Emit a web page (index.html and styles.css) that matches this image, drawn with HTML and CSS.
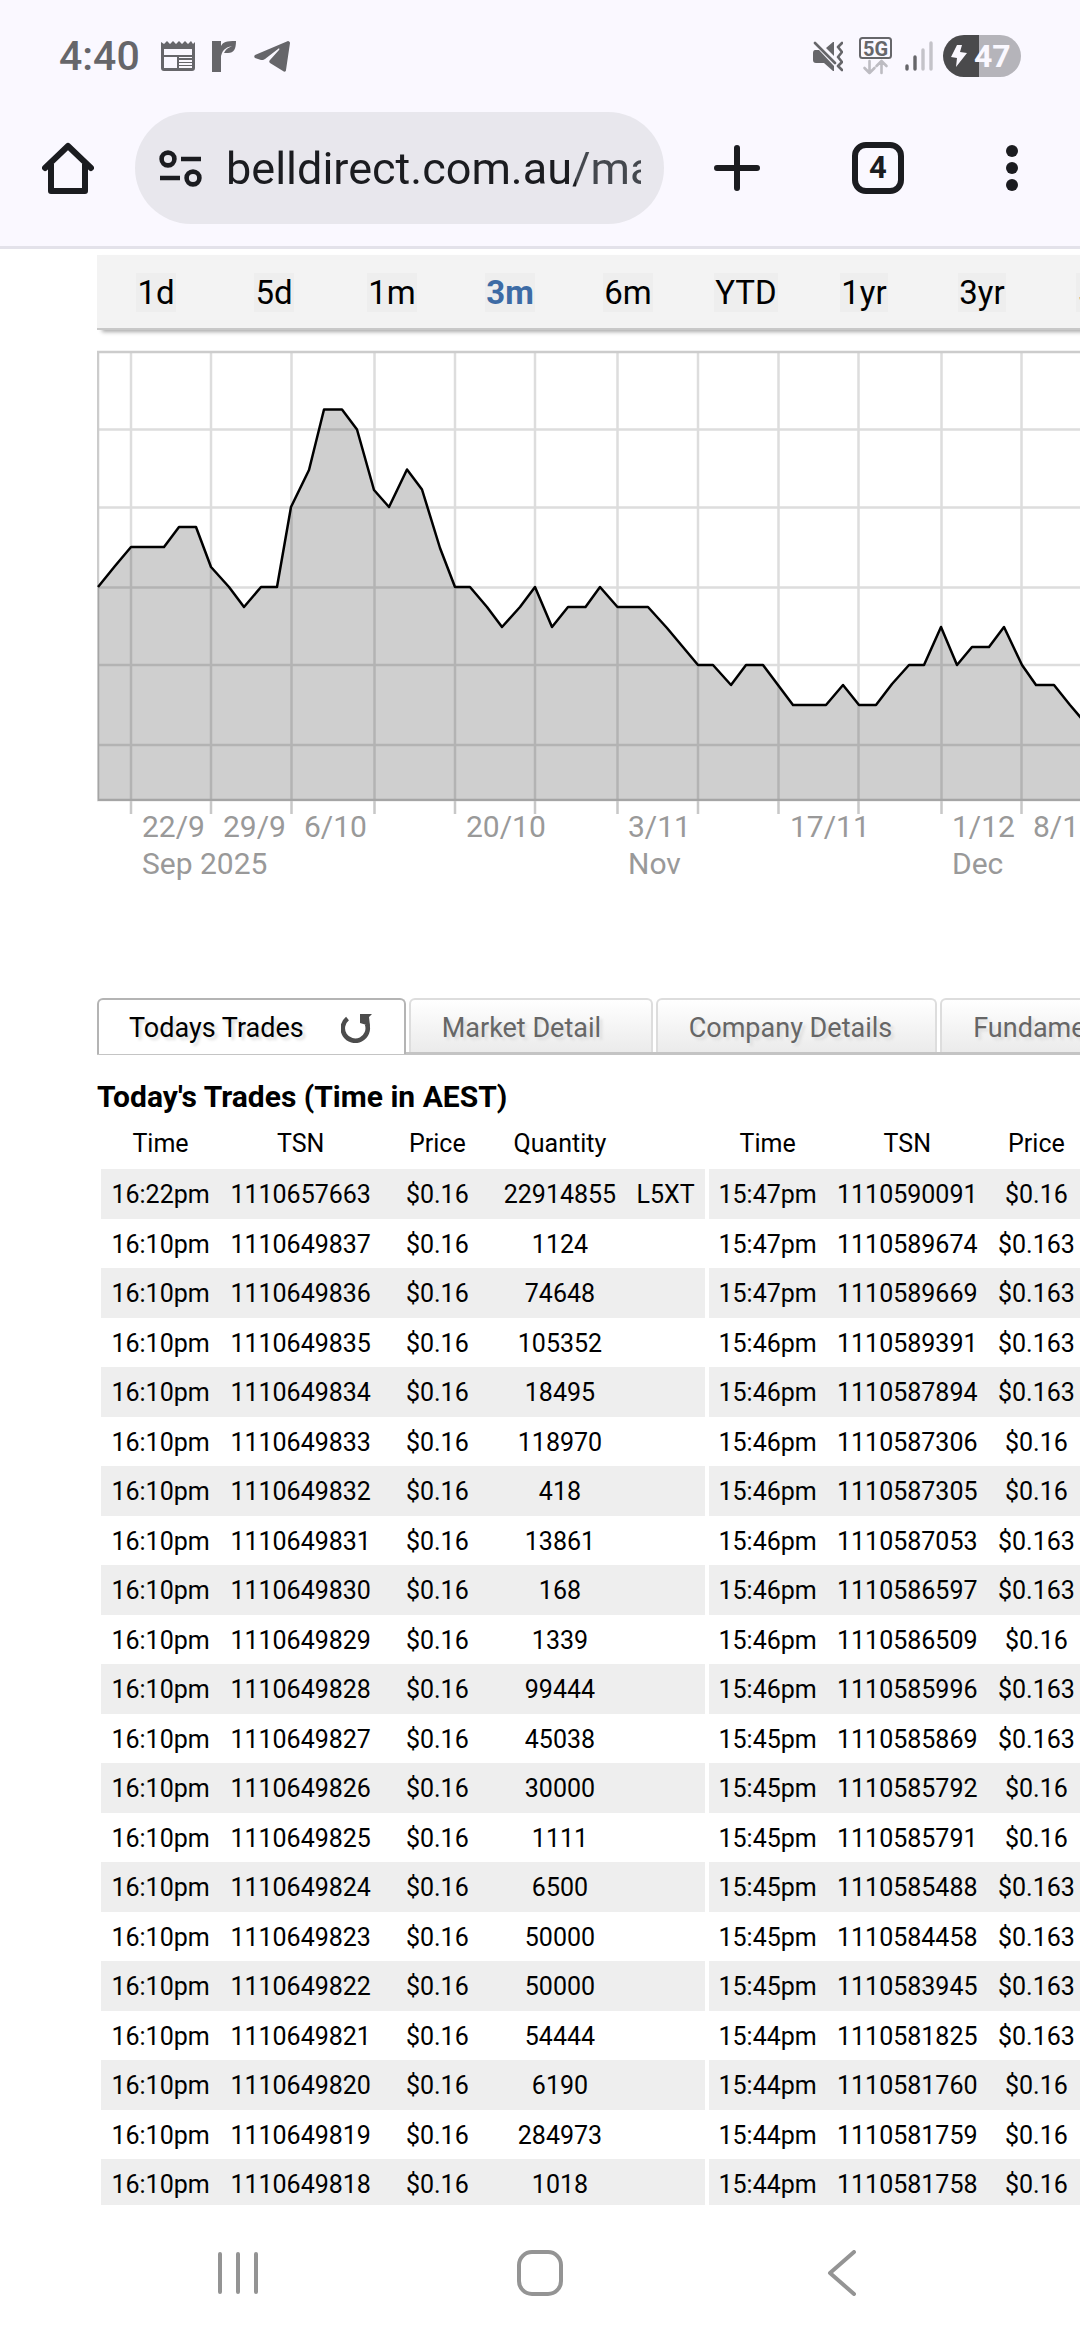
FILE: index.html
```html
<!DOCTYPE html>
<html lang="en">
<head>
<meta charset="utf-8">
<meta name="viewport" content="width=device-width, initial-scale=1">
<title>Bell Direct</title>
<link rel="stylesheet" href="styles.css">
</head>
<body>
<header class="browser">
  <div class="status">
    <span class="clock">4:40</span>
    <svg class="st-cal" width="34" height="32" viewBox="0 0 34 32"><path fill="#66666a" fill-rule="evenodd" d="M0 2l3 2 3-3 3 3 3-3 3 3 3-3 3 3 3-3 3 3 3-3 2 3 2-2v26a3 3 0 0 1-3 3H3a3 3 0 0 1-3-3zM3 9v6h28V9zM3 17v11h13V17zM18 17v1h13v-1zM18 20v2h13v-2zM18 23v2h13v-2zM18 26v2h13v-2z"/></svg>
    <svg class="st-r" width="24" height="32" viewBox="0 0 24 32"><path fill="#66666a" d="M0 1h9v5C11 2 14 1 24 1c0 8-2 12-8 12h-4c2-4 4-5 8-7-5 1-8 3-10 7l-1 3v16H0z"/></svg>
    <svg class="st-tg" width="36" height="32" viewBox="0 0 36 32"><path fill="#66666a" d="M34 1c1 0 2 1 2 2l-4 27c0 2-2 2-3 1l-13-8c-1-1-1-2 0-3l9-10c1-1 0-2-1-1L11 19c-1 1-3 1-4 1l-6-2c-1-1-1-2 0-3z"/></svg>
    <span class="spacer"></span>
    <svg class="st-mute" width="30" height="32" viewBox="0 0 30 32"><path fill="#66666a" d="M2 10h4l15 16v5h-1l-9-8H3c-2 0-3-1-3-3v-7c0-2 1-3 2-3zM13 8l7-6h1v14z"/><path fill="none" stroke="#66666a" stroke-width="2.6" stroke-linecap="round" stroke-linejoin="round" d="M2 3l20 20M29 3l-4 4 4 5-4 5 4 5-4 4 4 4"/></svg>
    <svg class="st-5g" width="33" height="38" viewBox="0 0 33 38"><rect x="1" y="1" width="31" height="20" rx="2.500" fill="none" stroke="#66666a" stroke-width="2"/><text x="16.500" y="18.500" text-anchor="middle" class="t5g">5G</text><path fill="none" stroke="#bdbcc2" stroke-width="2.600" stroke-linecap="round" stroke-linejoin="round" d="M10.500 24v12M5.500 31l5 5 5-5M22.500 36V24M17.500 29l5-5 5 5"/></svg>
    <svg class="st-sig" width="28" height="30" viewBox="0 0 28 30"><g stroke-width="3.400" stroke-linecap="round"><path stroke="#66666a" d="M2 25v3M10 16v12"/><path stroke="#c4c3c9" d="M18 9v19M26 2v26"/></g></svg>
    <span class="battery"><svg width="16" height="22" viewBox="0 0 16 22"><path fill="#faf8ff" d="M6 0h5L9 7l7 1L5 22l1-9-6-1z"/></svg>47</span>
  </div>
  <div class="toolbar">
    <button class="ico home" aria-label="Home"><svg width="52" height="52" viewBox="0 0 52 52"><path fill="none" stroke="#1b1c20" stroke-width="6" stroke-linejoin="round" stroke-linecap="round" d="M3 26L26 4l23 22"/><path fill="none" stroke="#1b1c20" stroke-width="6" stroke-linejoin="round" d="M9 22v27h34V22"/></svg></button>
    <div class="omnibox">
      <svg width="43" height="37" viewBox="0 0 43 37"><g fill="none" stroke="#1b1c20" stroke-width="4.600"><circle cx="9" cy="9" r="6.400"/><circle cx="34" cy="28" r="6.400"/><path d="M22 9h20M1 28h20"/></g></svg>
      <input class="url" type="text" aria-label="Address" value="belldirect.com.au/markets">
    </div>
    <button class="ico" aria-label="New tab"><svg width="46" height="48" viewBox="0 0 46 48"><path stroke="#1b1c20" stroke-width="6" stroke-linecap="round" d="M23 4v40M3 24h40"/></svg></button>
    <button class="tabcount" aria-label="Open tabs">4</button>
    <button class="ico menu" aria-label="Menu"><svg width="12" height="48" viewBox="0 0 12 48"><g fill="#1b1c20"><circle cx="6" cy="7" r="6"/><circle cx="6" cy="24" r="6"/><circle cx="6" cy="41" r="6"/></g></svg></button>
  </div>
</header>
<main class="page">
  <div class="ranges">
    <button><span>1d</span></button><button><span>5d</span></button><button><span>1m</span></button><button class="on"><span>3m</span></button><button><span>6m</span></button><button><span>YTD</span></button><button><span>1yr</span></button><button><span>3yr</span></button><button><span>5yr</span></button>
  </div>
  <svg class="chart" width="1000" height="540" viewBox="97 350 1000 540" role="img" aria-label="Price, three months">
    <g class="grid"><path d="M97 429.500h1000M97 507.500h1000M97 587.500h1000M97 665h1000M97 745h1000"/><path d="M131 352v448M211 352v448M291.500 352v448M374.500 352v448M455 352v448M535 352v448M617.500 352v448M698 352v448M778.500 352v448M858.500 352v448M941.500 352v448M1021.500 352v448"/></g>
    <path class="ticks" d="M131 801v13M211 801v13M291.500 801v13M374.500 801v13M455 801v13M535 801v13M617.500 801v13M698 801v13M778.500 801v13M858.500 801v13M941.500 801v13M1021.500 801v13"/>
    <path class="axis" d="M1097 352H98v448h999"/>
    <path class="area" d="M98 801V587L115 566 131 547H164L179 527H196L211 567 229 587 244 607 261 587H277L291 507 309 470 324 409.500H342L357 429.500 374 490 389 507 407 469.500 422 489.500 440 548 455 587H470L487 607 502 627 520 607 535 587 552 627 568 607H585.500L600 587 617.500 607H648L667 628 698 665H713L731 685 746 665H763L778 685 793 705H826L843 685 859 705H876L892 684 909 665H924L941 627 957 665 972 647H989L1004 627 1022 665 1036 685H1054L1070 705 1087 725V801z"/>
    <path class="line" d="M98 587L115 566 131 547H164L179 527H196L211 567 229 587 244 607 261 587H277L291 507 309 470 324 409.500H342L357 429.500 374 490 389 507 407 469.500 422 489.500 440 548 455 587H470L487 607 502 627 520 607 535 587 552 627 568 607H585.500L600 587 617.500 607H648L667 628 698 665H713L731 685 746 665H763L778 685 793 705H826L843 685 859 705H876L892 684 909 665H924L941 627 957 665 972 647H989L1004 627 1022 665 1036 685H1054L1070 705 1087 725"/>
    <g class="dates"><text x="142" y="837">22/9</text><text x="223" y="837">29/9</text><text x="304" y="837">6/10</text><text x="466" y="837">20/10</text><text x="628" y="837">3/11</text><text x="790" y="837">17/11</text><text x="952" y="837">1/12</text><text x="1033" y="837">8/12</text><text x="142" y="874">Sep 2025</text><text x="628" y="874">Nov</text><text x="952" y="874">Dec</text></g>
  </svg>
  <div class="tabs">
    <button class="tab current">Todays Trades<svg width="32" height="30" viewBox="0 0 32 30"><path fill="none" stroke="#4c4c4c" stroke-width="4.600" d="M6.500 5.500A12.500 12.500 0 1 0 26 11"/><path fill="#4c4c4c" d="M19 1h12l-3 3 1 9-10-3z"/></svg></button>
    <button class="tab">Market Detail</button>
    <button class="tab">Company Details</button>
    <button class="tab">Fundamentals</button>
  </div>
  <h2>Today's Trades (Time in AEST)</h2>
  <table class="trades">
    <colgroup><col class="c-time"><col class="c-tsn"><col class="c-price"><col class="c-qty"><col class="c-code"><col class="c-time2"><col class="c-tsn"><col class="c-price2"></colgroup>
    <thead><tr><th>Time</th><th>TSN</th><th>Price</th><th>Quantity</th><th></th><th class="g">Time</th><th>TSN</th><th>Price</th></tr></thead>
    <tbody>
      <tr><td>16:22pm</td><td>1110657663</td><td>$0.16</td><td>22914855</td><td>L5XT</td><td class="g">15:47pm</td><td>1110590091</td><td>$0.16</td></tr>
      <tr><td>16:10pm</td><td>1110649837</td><td>$0.16</td><td>1124</td><td></td><td class="g">15:47pm</td><td>1110589674</td><td>$0.163</td></tr>
      <tr><td>16:10pm</td><td>1110649836</td><td>$0.16</td><td>74648</td><td></td><td class="g">15:47pm</td><td>1110589669</td><td>$0.163</td></tr>
      <tr><td>16:10pm</td><td>1110649835</td><td>$0.16</td><td>105352</td><td></td><td class="g">15:46pm</td><td>1110589391</td><td>$0.163</td></tr>
      <tr><td>16:10pm</td><td>1110649834</td><td>$0.16</td><td>18495</td><td></td><td class="g">15:46pm</td><td>1110587894</td><td>$0.163</td></tr>
      <tr><td>16:10pm</td><td>1110649833</td><td>$0.16</td><td>118970</td><td></td><td class="g">15:46pm</td><td>1110587306</td><td>$0.16</td></tr>
      <tr><td>16:10pm</td><td>1110649832</td><td>$0.16</td><td>418</td><td></td><td class="g">15:46pm</td><td>1110587305</td><td>$0.16</td></tr>
      <tr><td>16:10pm</td><td>1110649831</td><td>$0.16</td><td>13861</td><td></td><td class="g">15:46pm</td><td>1110587053</td><td>$0.163</td></tr>
      <tr><td>16:10pm</td><td>1110649830</td><td>$0.16</td><td>168</td><td></td><td class="g">15:46pm</td><td>1110586597</td><td>$0.163</td></tr>
      <tr><td>16:10pm</td><td>1110649829</td><td>$0.16</td><td>1339</td><td></td><td class="g">15:46pm</td><td>1110586509</td><td>$0.16</td></tr>
      <tr><td>16:10pm</td><td>1110649828</td><td>$0.16</td><td>99444</td><td></td><td class="g">15:46pm</td><td>1110585996</td><td>$0.163</td></tr>
      <tr><td>16:10pm</td><td>1110649827</td><td>$0.16</td><td>45038</td><td></td><td class="g">15:45pm</td><td>1110585869</td><td>$0.163</td></tr>
      <tr><td>16:10pm</td><td>1110649826</td><td>$0.16</td><td>30000</td><td></td><td class="g">15:45pm</td><td>1110585792</td><td>$0.16</td></tr>
      <tr><td>16:10pm</td><td>1110649825</td><td>$0.16</td><td>1111</td><td></td><td class="g">15:45pm</td><td>1110585791</td><td>$0.16</td></tr>
      <tr><td>16:10pm</td><td>1110649824</td><td>$0.16</td><td>6500</td><td></td><td class="g">15:45pm</td><td>1110585488</td><td>$0.163</td></tr>
      <tr><td>16:10pm</td><td>1110649823</td><td>$0.16</td><td>50000</td><td></td><td class="g">15:45pm</td><td>1110584458</td><td>$0.163</td></tr>
      <tr><td>16:10pm</td><td>1110649822</td><td>$0.16</td><td>50000</td><td></td><td class="g">15:45pm</td><td>1110583945</td><td>$0.163</td></tr>
      <tr><td>16:10pm</td><td>1110649821</td><td>$0.16</td><td>54444</td><td></td><td class="g">15:44pm</td><td>1110581825</td><td>$0.163</td></tr>
      <tr><td>16:10pm</td><td>1110649820</td><td>$0.16</td><td>6190</td><td></td><td class="g">15:44pm</td><td>1110581760</td><td>$0.16</td></tr>
      <tr><td>16:10pm</td><td>1110649819</td><td>$0.16</td><td>284973</td><td></td><td class="g">15:44pm</td><td>1110581759</td><td>$0.16</td></tr>
      <tr><td>16:10pm</td><td>1110649818</td><td>$0.16</td><td>1018</td><td></td><td class="g">15:44pm</td><td>1110581758</td><td>$0.16</td></tr>
    </tbody>
  </table>
</main>
<nav class="sysnav">
  <button aria-label="Recent apps"><svg width="42" height="46" viewBox="0 0 42 46"><path stroke="#949494" stroke-width="4" stroke-linecap="round" d="M3 4v38M21 4v38M39 4v38"/></svg></button>
  <button aria-label="Home screen"><svg width="46" height="46" viewBox="0 0 46 46"><rect x="2" y="2" width="42" height="42" rx="13" fill="none" stroke="#949494" stroke-width="4"/></svg></button>
  <button aria-label="Back"><svg width="30" height="46" viewBox="0 0 30 46"><path fill="none" stroke="#949494" stroke-width="4" stroke-linecap="round" stroke-linejoin="round" d="M27 2L3 23l24 21"/></svg></button>
</nav>
</body>
</html>
```
FILE: styles.css
```css
* { box-sizing: border-box; }
body {
  margin: 0;
  height: 100vh;
  display: flex;
  flex-direction: column;
  overflow: hidden;
  background: #fff;
  color: #000;
  font-family: Roboto, "Liberation Sans", sans-serif;
}
button {
  margin: 0;
  padding: 0;
  border: 0;
  background: none;
  color: inherit;
  font: inherit;
}
svg { display: block; flex: none; }

.browser {
  flex: none;
  background: #faf8ff;
  border-bottom: 3px solid #e3e2ea;
}
.status {
  display: flex;
  align-items: center;
  height: 112px;
  padding: 0 59px;
}
.clock {
  color: #66666a;
  font-size: 41px;
  font-weight: 500;
  margin-right: 21px;
}
.st-cal { margin-right: 17px; }
.st-r { margin-right: 18px; }
.spacer { flex: 1; }
.st-mute { margin-right: 16px; }
.st-5g { margin-right: 13px; }
.st-sig { margin-right: 10px; }
.t5g { font-size: 20px; font-weight: 700; fill: #66666a; }
.battery {
  display: flex;
  align-items: center;
  gap: 7px;
  width: 78px;
  height: 42px;
  padding-left: 8px;
  border-radius: 21px;
  background: linear-gradient(90deg, #4a4a4c 36px, #b5b4ba 36px);
  color: #faf8ff;
  font-size: 32px;
  font-weight: 700;
}

.toolbar {
  display: flex;
  align-items: center;
  height: 134px;
  padding: 0 62px 22px 42px;
}
.omnibox {
  display: flex;
  align-items: center;
  flex: 1;
  gap: 24px;
  min-width: 0;
  height: 112px;
  margin: 0 50px 0 41px;
  padding: 0 23px 0 24px;
  border-radius: 56px;
  background: #e8e7ed;
}
.url {
  flex: 1;
  min-width: 0;
  height: 60px;
  padding: 0;
  border: 0;
  background: linear-gradient(90deg, #1b1c20 350px, #44484e 350px);
  -webkit-background-clip: text;
  background-clip: text;
  color: transparent;
  font: 45px Roboto, sans-serif;
}
.tabcount {
  width: 52px;
  height: 52px;
  margin: 0 102px 0 92px;
  border: 6px solid #1b1c20;
  border-radius: 14px;
  color: #1b1c20;
  font-size: 31px;
  font-weight: 700;
  line-height: 40px;
}

.page {
  flex: 1;
  min-height: 0;
  overflow: hidden;
  padding: 6px 0 0 97px;
}
.ranges {
  display: flex;
  width: max-content;
  height: 75px;
  background: #f3f3f3;
  border-bottom: 2px solid #c8c8c8;
  box-shadow: 4px 3px 4px -1px #aaa;
}
.ranges button {
  width: 118px;
  padding-top: 2px;
  font-size: 33px;
  line-height: 39px;
}
.ranges span {
  display: inline-block;
  padding: 0 1px;
  background: #eee;
}
.ranges .on { color: #3d6ba5; font-weight: 700; }

.chart { margin-top: 20px; }
.grid path { fill: none; stroke: #ddd; stroke-width: 2.5; }
.ticks { fill: none; stroke: #c8c8c8; stroke-width: 2.5; }
.axis { fill: none; stroke: #ccc; stroke-width: 2.5; }
.area { fill: #000; fill-opacity: 0.188; }
.line { fill: none; stroke: #000; stroke-width: 2.5; stroke-linejoin: round; }
.dates text { font-size: 30px; fill: #999; }

.tabs {
  display: flex;
  gap: 3px;
  width: max-content;
  height: 57px;
  margin-top: 108px;
  border-bottom: 3px solid #c4c4c4;
}
.tab {
  display: flex;
  align-items: center;
  min-width: 244px;
  height: 54px;
  padding: 4px 43px 0 31px;
  border: 2px solid #ddd;
  border-bottom: 0;
  border-radius: 6px 6px 0 0;
  background: linear-gradient(#fff, #ebebeb);
  color: #666;
  font-size: 27px;
  text-shadow: 3px 3px 3px #ddd;
}
.tab.current {
  height: 56px;
  padding: 4px 31px 2px 30px;
  gap: 37px;
  border-color: #b4b4b4;
  background: #fff;
  color: #000;
}
h2 {
  margin: 24px 0 10px;
  font-size: 30px;
  line-height: 35px;
}
.trades {
  width: 984px;
  margin-left: 4px;
  table-layout: fixed;
  border-collapse: separate;
  border-spacing: 0;
  font-size: 25px;
  line-height: 30px;
}
.c-time { width: 119px; }
.c-tsn { width: 161px; }
.c-price { width: 112px; }
.c-qty { width: 133px; }
.c-code { width: 78px; }
.c-time2 { width: 122px; }
.c-price2 { width: 97px; }
.trades th {
  height: 45px;
  padding: 0 0 6px;
  font-weight: 400;
}
.trades td {
  height: 49px;
  padding: 2px 0 0;
  text-align: center;
}
.trades tr:nth-child(odd) td {
  height: 50px;
  background: #eee;
}
.trades .g { border-left: 4px solid #fff; }

.sysnav {
  flex: none;
  display: grid;
  grid-template-columns: repeat(3, 1fr);
  width: 84%;
  height: 135px;
  margin: 0 auto;
}
.sysnav button {
  display: flex;
  align-items: center;
  justify-content: center;
}
```
